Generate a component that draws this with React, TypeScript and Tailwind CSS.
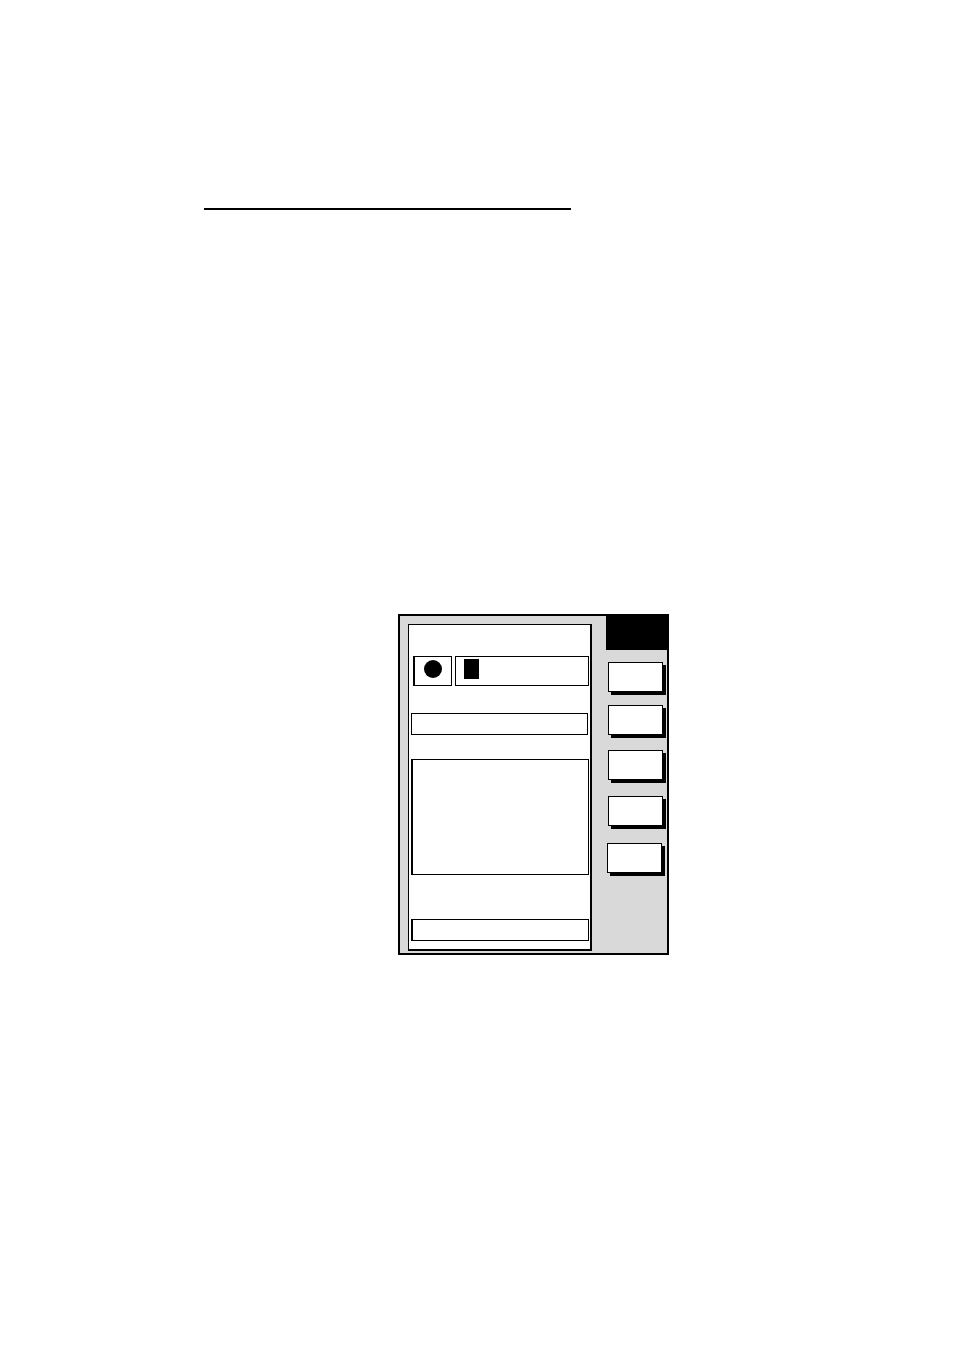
import React from 'react';

const SoftKey: React.FC<{ className?: string }> = ({ className = '' }) => (
    <div className={`w-[55px] h-[30px] bg-white border border-black shadow-[3px_3px_0_0_#000] ${className}`}></div>
);

const App: React.FC = () => {
    return (
        <div className="w-[954px] h-[1350px] bg-white relative overflow-hidden" style={{ fontFamily: '"Liberation Sans", Arial, sans-serif' }}>
            {/* Heading rule */}
            <div className="ml-[204px] pt-[208px]">
                <div className="w-[367px] h-[2px] bg-black"></div>
            </div>

            {/* Screen frame */}
            <div className="ml-[398px] mt-[404px] w-[271px] h-[341px] border-2 border-black bg-[#d9d9d9] flex">
                {/* Main display area */}
                <div className="ml-[8px] mt-[8px] w-[185px] h-[327px] bg-white border-l border-t border-r-2 border-b-2 border-black flex flex-col">
                    <div className="flex ml-[4px] mt-[31px] gap-[3px]">
                        <div className="w-[39px] h-[30px] border border-l-2 border-black">
                            <div className="ml-[9px] mt-[3px] w-[18px] h-[18px] rounded-full bg-black"></div>
                        </div>
                        <div className="w-[134px] h-[30px] border border-black">
                            <div className="ml-[8px] mt-[2px] w-[15px] h-[20px] bg-black"></div>
                        </div>
                    </div>
                    <div className="ml-[2px] mt-[27px] w-[177px] h-[22px] border border-black"></div>
                    <div className="ml-[2px] mt-[24px] w-[178px] h-[116px] border border-l-2 border-black"></div>
                    <div className="ml-[2px] mt-[44px] w-[178px] h-[22px] border border-l-2 border-black"></div>
                </div>

                {/* Soft key column */}
                <div className="flex flex-col">
                    <div className="ml-[14px] -mt-[1px] w-[61px] h-[35px] bg-black"></div>
                    <SoftKey className="ml-[16px] mt-[12px]" />
                    <SoftKey className="ml-[16px] mt-[13px]" />
                    <SoftKey className="ml-[16px] mt-[15px]" />
                    <SoftKey className="ml-[16px] mt-[16px]" />
                    <SoftKey className="ml-[15px] mt-[17px]" />
                </div>
            </div>
        </div>
    );
};

export default App;
